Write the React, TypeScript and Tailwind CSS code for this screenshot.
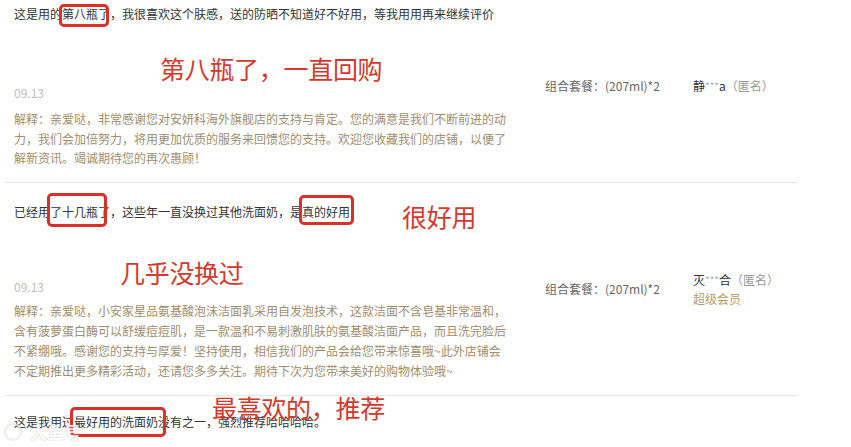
import React from 'react';

const font = { fontFamily: '"Noto Sans CJK SC", "Microsoft YaHei", sans-serif' };

interface Box {
    left: number;
    top: number;
    width: number;
    height: number;
}

// red marker boxes drawn over the comments
const boxes: Box[] = [
    { left: 59, top: 4, width: 50, height: 23 },
    { left: 47, top: 193, width: 60, height: 34 },
    { left: 299, top: 195, width: 55, height: 30 },
    { left: 70, top: 407, width: 96, height: 30 },
];

const Marker: React.FC<{ box: Box }> = ({ box }) => (
    <div
        className="absolute rounded-[5px] border-[3px] border-[#d9302a]"
        style={{ left: box.left, top: box.top, width: box.width, height: box.height }}
    />
);

const Note: React.FC<{ text: string; className: string }> = ({ text, className }) => (
    <div className={`absolute text-[25px] leading-[30px] tracking-[-0.3px] text-[#d23a2e] whitespace-nowrap ${className}`}>
        {text}
    </div>
);

const User: React.FC<{ first: string; last: string }> = ({ first, last }) => (
    <div className="text-[12px] leading-[18px] text-[#333]">
        {first}
        <span className="text-[#aaa] text-[10px] align-top">***</span>
        {last}
        <span className="text-[#999]">（匿名）</span>
    </div>
);

const App: React.FC = () => {
    return (
        <div className="relative w-[851px] h-[447px] overflow-hidden bg-white" style={font}>
            <div className="ml-[5px] w-[792px]">
                {/* Review 1 */}
                <div className="flex pl-[9px] pb-[14px] border-b border-[#e6e6e6]">
                    <div className="w-[531px] pt-[5px]">
                        <div className="text-[12px] leading-[18px] text-[#333] whitespace-nowrap">
                            这是用的第八瓶了，我很喜欢这个肤感，送的防晒不知道好不好用，等我用用再来继续评价
                        </div>
                        <div className="mt-[61px] text-[12px] leading-[18px] text-[#bdbdbd]">09.13</div>
                        <div className="mt-[7px] text-[12px] leading-[19.5px] text-[#a08d6c] whitespace-nowrap">
                            解释：亲爱哒，非常感谢您对安妍科海外旗舰店的支持与肯定。您的满意是我们不断前进的动<br />
                            力，我们会加倍努力，将用更加优质的服务来回馈您的支持。欢迎您收藏我们的店铺，以便了<br />
                            解新资讯。竭诚期待您的再次惠顾！
                        </div>
                    </div>
                    <div className="w-[148px] mt-[77px] text-[12px] leading-[18px] text-[#666]">
                        组合套餐：(207ml)*2
                    </div>
                    <div className="mt-[77px]">
                        <User first="静" last="a" />
                    </div>
                </div>

                {/* Review 2 */}
                <div className="flex pl-[9px] pb-[14px] border-b border-[#e6e6e6]">
                    <div className="w-[531px] pt-[20px]">
                        <div className="text-[12px] leading-[18px] text-[#333] whitespace-nowrap">
                            已经用了十几瓶了，这些年一直没换过其他洗面奶，是真的好用
                        </div>
                        <div className="mt-[57px] text-[12px] leading-[18px] text-[#bdbdbd]">09.13</div>
                        <div className="mt-[5px] text-[12px] leading-[20px] text-[#a08d6c] whitespace-nowrap">
                            解释：亲爱哒，小安家星品氨基酸泡沫洁面乳采用自发泡技术，这款洁面不含皂基非常温和，<br />
                            含有菠萝蛋白酶可以舒缓痘痘肌，是一款温和不易刺激肌肤的氨基酸洁面产品，而且洗完脸后<br />
                            不紧绷哦。感谢您的支持与厚爱！坚持使用，相信我们的产品会给您带来惊喜哦~此外店铺会<br />
                            不定期推出更多精彩活动，还请您多多关注。期待下次为您带来美好的购物体验哦~
                        </div>
                    </div>
                    <div className="w-[148px] mt-[97px] text-[12px] leading-[18px] text-[#666]">
                        组合套餐：(207ml)*2
                    </div>
                    <div className="mt-[88px]">
                        <User first="灭" last="合" />
                        <div className="text-[12px] leading-[19px] text-[#b59b6c]">超级会员</div>
                    </div>
                </div>

                {/* Review 3 */}
                <div className="pl-[9px] pt-[17px]">
                    <div className="text-[12px] leading-[18px] text-[#333] whitespace-nowrap">
                        这是我用过最好用的洗面奶没有之一，强烈推荐哈哈哈哈。
                    </div>
                </div>
            </div>

            {/* annotations */}
            {boxes.map((b, i) => (
                <Marker key={i} box={b} />
            ))}
            <Note text="第八瓶了，一直回购" className="left-[160px] top-[53px]" />
            <Note text="很好用" className="left-[402px] top-[201px]" />
            <Note text="几乎没换过" className="left-[120px] top-[257px]" />
            <Note text="最喜欢的，推荐" className="left-[212px] top-[392px]" />

            {/* watermark */}
            <div className="absolute left-[4px] top-[421px] flex items-center gap-[8px] opacity-80">
                <div className="w-[18px] h-[18px] rounded-full border-[2px] border-[#e8e8e8]" />
                <div
                    className="text-[17px] leading-[22px] font-bold text-white"
                    style={{ textShadow: '0 0 1px #bbb, 0 0 1px #bbb' }}
                >
                    大鱼号
                </div>
            </div>
        </div>
    );
};

export default App;
